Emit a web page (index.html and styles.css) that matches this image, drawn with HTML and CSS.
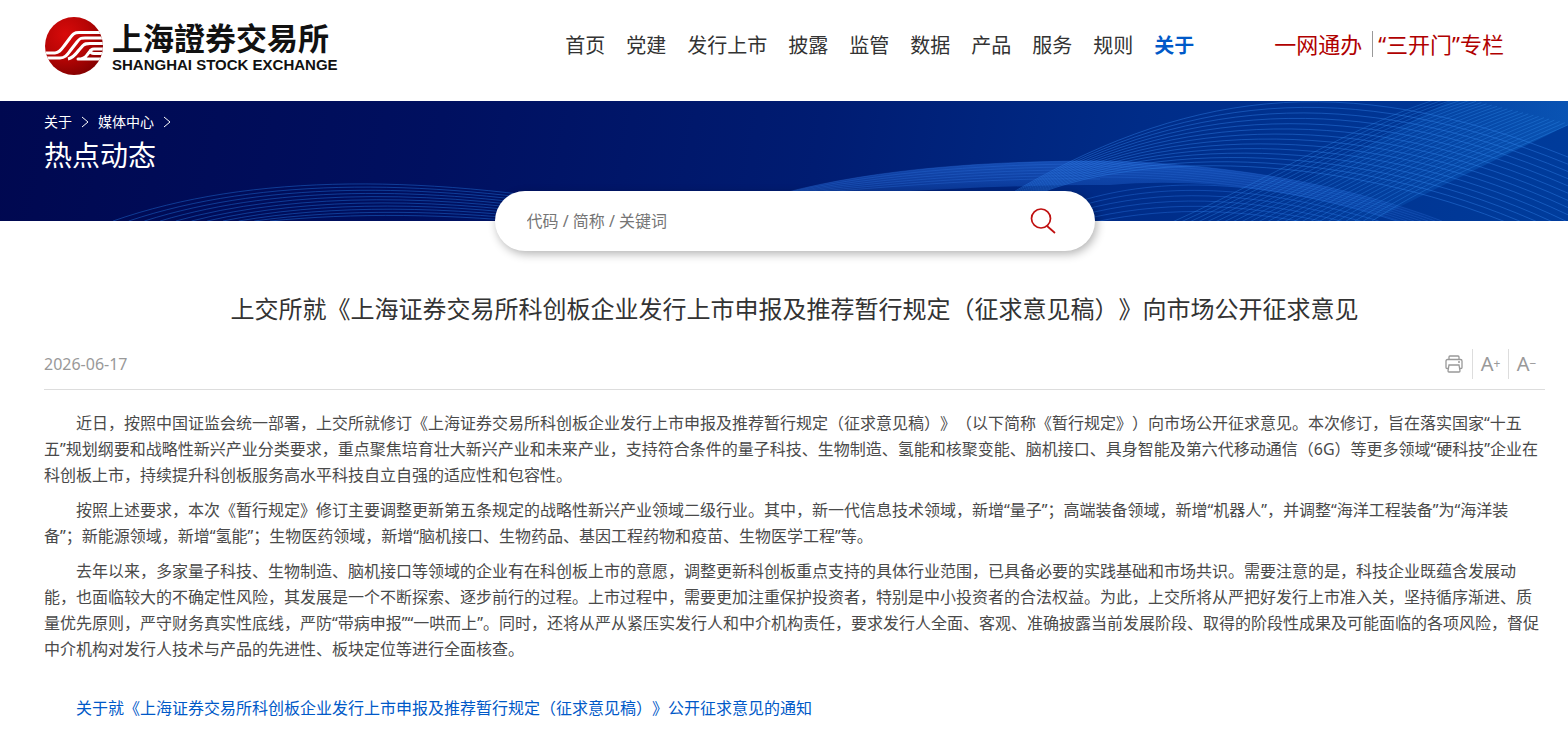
FILE: index.html
```html
<!DOCTYPE html>
<html lang="zh-CN">
<head>
    <meta charset="UTF-8">
    <meta name="viewport" content="width=device-width, initial-scale=1.0">
    <title>热点动态 | 上海证券交易所</title>
    <link rel="stylesheet" href="styles.css">
</head>
<body>
    <header class="header">
        <a class="logo" href="#">
            <svg class="logo-mark" viewBox="0 0 58 58" aria-hidden="true">
                <defs>
                    <radialGradient id="ball" cx="0.35" cy="0.3" r="0.8">
                        <stop offset="0" stop-color="#d80a0a"/>
                        <stop offset="0.5" stop-color="#b80505"/>
                        <stop offset="1" stop-color="#7c0000"/>
                    </radialGradient>
                    <clipPath id="round"><circle cx="29" cy="29" r="29"/></clipPath>
                </defs>
                <circle cx="29" cy="29" r="29" fill="url(#ball)"/>
                <g clip-path="url(#round)" fill="none" stroke="#fff" stroke-width="3" stroke-linejoin="round">
                    <path d="M0 36H10C14 36 16 33 19 29L25 21C28 17 29 15.500 34 15.500H58"/>
                    <path d="M0 41H15C20 41 22 38 25 34L32 25C35 21 36 21 40 21H58"/>
                    <path d="M23 42C28 41 31 37 34 33L38 28.500C40 26.500 41 26.500 45 26.500H58"/>
                    <path d="M58 32H49C45 32 44 36.500 49 36.500H58"/>
                    <path d="M46 33L42 38C40 41 38 42 33 42H58"/>
                </g>
            </svg>
            <span class="logo-text">
                <span class="logo-cn">上海證券交易所</span>
                <span class="logo-en">SHANGHAI STOCK EXCHANGE</span>
            </span>
        </a>
        <nav class="nav">
            <a href="#">首页</a>
            <a href="#">党建</a>
            <a href="#">发行上市</a>
            <a href="#">披露</a>
            <a href="#">监管</a>
            <a href="#">数据</a>
            <a href="#">产品</a>
            <a href="#">服务</a>
            <a href="#">规则</a>
            <a class="active" href="#">关于</a>
        </nav>
        <div class="special">
            <a href="#">一网通办</a>
            <a href="#">“三开门”专栏</a>
        </div>
    </header>

    <div class="banner">
        <svg class="waves" id="waves" viewBox="0 0 1568 120" preserveAspectRatio="xMaxYMid slice" aria-hidden="true">
            <defs>
                <linearGradient id="bandFill" x1="0" y1="0" x2="0" y2="1">
                    <stop offset="0" stop-color="#2468d8" stop-opacity="0.6"/>
                    <stop offset="1" stop-color="#1450b8" stop-opacity="0.15"/>
                </linearGradient>
                <linearGradient id="ribbonFill" x1="0" y1="0" x2="1" y2="0">
                    <stop offset="0" stop-color="#0a58c0" stop-opacity="0"/>
                    <stop offset="1" stop-color="#1878d8" stop-opacity="0.4"/>
                </linearGradient>
            </defs>
            <path fill="url(#bandFill)" d="M780 93C880 66 1000 60 1100 60C1230 62 1350 85 1442 120H1400C1310 90 1200 76 1110 84C980 84 880 92 780 98Z"/>
            <path fill="url(#ribbonFill)" d="M1230 120C1310 80 1390 30 1450 0H1568V24C1490 62 1430 90 1372 120Z"/>
        </svg>
        <div class="banner-text">
            <nav class="crumbs">
                <a href="#">关于</a>
                <svg viewBox="0 0 8 12" aria-hidden="true"><path d="M1 1L7 6L1 11"/></svg>
                <a href="#">媒体中心</a>
                <svg viewBox="0 0 8 12" aria-hidden="true"><path d="M1 1L7 6L1 11"/></svg>
            </nav>
            <h1 class="banner-title">热点动态</h1>
        </div>
    </div>

    <main class="main">
        <form class="search">
            <input type="text" name="keyword" placeholder="代码 / 简称 / 关键词" aria-label="搜索">
            <button type="submit" aria-label="搜索">
                <svg viewBox="0 0 26 26" aria-hidden="true">
                    <circle cx="11" cy="10.500" r="9.500"/>
                    <path d="M17 18L25 25"/>
                </svg>
            </button>
        </form>

        <article>
            <h2 class="title">上交所就《上海证券交易所科创板企业发行上市申报及推荐暂行规定（征求意见稿）》向市场公开征求意见</h2>
            <div class="info">
                <time datetime="2026-06-17">2026-06-17</time>
                <div class="tools">
                    <button type="button" aria-label="打印">
                        <svg viewBox="0 0 18 18" aria-hidden="true">
                            <path d="M4 4.500V2Q4 1 5 1H13Q14 1 14 2V4.500"/>
                            <path d="M3.500 13.500H2Q1 13.500 1 12.500V6Q1 4.500 2.500 4.500H15.500Q17 4.500 17 6V12.500Q17 13.500 16 13.500H14.500"/>
                            <path d="M4 10H14L15 16Q15 17 14 17H4Q3 17 3 16Z"/>
                            <path d="M13 7H15"/>
                        </svg>
                    </button>
                    <button type="button" aria-label="放大字号">A<span>+</span></button>
                    <button type="button" aria-label="缩小字号">A<span>−</span></button>
                </div>
            </div>
            <div class="content">
                <p>近日，按照中国证监会统一部署，上交所就修订《上海证券交易所科创板企业发行上市申报及推荐暂行规定（征求意见稿）》（以下简称《暂行规定》）向市场公开征求意见。本次修订，旨在落实国家“十五五”规划纲要和战略性新兴产业分类要求，重点聚焦培育壮大新兴产业和未来产业，支持符合条件的量子科技、生物制造、氢能和核聚变能、脑机接口、具身智能及第六代移动通信（6G）等更多领域“硬科技”企业在科创板上市，持续提升科创板服务高水平科技自立自强的适应性和包容性。</p>
                <p>按照上述要求，本次《暂行规定》修订主要调整更新第五条规定的战略性新兴产业领域二级行业。其中，新一代信息技术领域，新增“量子”；高端装备领域，新增“机器人”，并调整“海洋工程装备”为“海洋装备”；新能源领域，新增“氢能”；生物医药领域，新增“脑机接口、生物药品、基因工程药物和疫苗、生物医学工程”等。</p>
                <p>去年以来，多家量子科技、生物制造、脑机接口等领域的企业有在科创板上市的意愿，调整更新科创板重点支持的具体行业范围，已具备必要的实践基础和市场共识。需要注意的是，科技企业既蕴含发展动能，也面临较大的不确定性风险，其发展是一个不断探索、逐步前行的过程。上市过程中，需要更加注重保护投资者，特别是中小投资者的合法权益。为此，上交所将从严把好发行上市准入关，坚持循序渐进、质量优先原则，严守财务真实性底线，严防“带病申报”“一哄而上”。同时，还将从严从紧压实发行人和中介机构责任，要求发行人全面、客观、准确披露当前发展阶段、取得的阶段性成果及可能面临的各项风险，督促中介机构对发行人技术与产品的先进性、板块定位等进行全面核查。</p>
                <p class="attach"><a href="#">关于就《上海证券交易所科创板企业发行上市申报及推荐暂行规定（征求意见稿）》公开征求意见的通知</a></p>
            </div>
        </article>
    </main>

    <script src="waves.js"></script>
</body>
</html>
```

FILE: styles.css
```css
* {
    box-sizing: border-box;
}

body {
    margin: 0;
    background: #fff;
    color: #333;
    font-family: "Noto Sans", "Noto Sans CJK SC", sans-serif;
    font-size: 16px;
    text-spacing-trim: space-all;
}

a {
    color: inherit;
    text-decoration: none;
}

button {
    padding: 0;
    border: none;
    background: none;
    font-family: inherit;
    cursor: pointer;
}

h1, h2, p {
    margin: 0;
    font-weight: normal;
}

/* header */
.header {
    display: flex;
    align-items: center;
    height: 101px;
    padding: 0 64px 10px 45px;
}

.logo {
    display: flex;
    align-items: center;
    gap: 9px;
    color: #111;
}

.logo-mark {
    width: 58px;
    height: 58px;
}

.logo-text {
    display: flex;
    flex-direction: column;
    gap: 2px;
    white-space: nowrap;
}

.logo-cn {
    font-family: "Noto Sans CJK TC", sans-serif;
    font-size: 31px;
    font-weight: bold;
    line-height: 36px;
}

.logo-en {
    font-family: "Liberation Sans", Arial, sans-serif;
    font-size: 15px;
    font-weight: bold;
    line-height: 16px;
}

.nav {
    display: flex;
    gap: 21px;
    margin-left: auto;
    font-size: 20px;
    line-height: 28px;
    white-space: nowrap;
}

.nav .active {
    color: #0059c8;
    font-weight: bold;
}

.special {
    display: flex;
    align-items: center;
    margin-left: 80px;
    padding-bottom: 4px;
    color: #b00000;
    font-size: 22px;
    line-height: 26px;
    white-space: nowrap;
}

.special a + a {
    margin-left: 10px;
    padding-left: 5px;
    border-left: 1px solid #999;
}

/* banner */
.banner {
    position: relative;
    height: 120px;
    background: linear-gradient(100deg, #000850 0%, #001060 28%, #001c72 52%, #002c88 72%, #003c9c 100%);
    color: #fff;
    overflow: hidden;
}

.waves {
    position: absolute;
    top: 0;
    left: 0;
    width: 100%;
    height: 100%;
}

.banner-text {
    position: relative;
    padding: 11px 23px 0 44px;
}

.crumbs {
    display: flex;
    align-items: center;
    gap: 9px;
    font-size: 14px;
    line-height: 20px;
}

.crumbs svg {
    width: 8px;
    height: 12px;
    fill: none;
    stroke: #fff;
}

.banner-title {
    margin-top: 4px;
    font-size: 28px;
    line-height: 38px;
}

/* search */
.main {
    padding: 0 23px 20px 44px;
}

.search {
    position: relative;
    display: flex;
    align-items: center;
    width: 600px;
    max-width: 100%;
    height: 60px;
    margin: -30px auto 0;
    padding: 0 39px 0 32px;
    border-radius: 30px;
    background: #fff;
    box-shadow: 2px 3px 10px rgba(0, 0, 0, .3);
}

.search input {
    flex: 1;
    padding: 0;
    border: none;
    outline: none;
    background: transparent;
    font-family: inherit;
    font-size: 16px;
}

.search input::placeholder {
    color: #757575;
}

.search button,
.search svg {
    display: block;
    width: 26px;
    height: 26px;
}

.search svg {
    fill: none;
    stroke: #c01010;
    stroke-width: 1.7;
}

/* article */
.title {
    margin-top: 40px;
    font-size: 24px;
    line-height: 36px;
    text-align: center;
}

.info {
    display: flex;
    align-items: center;
    justify-content: space-between;
    height: 50px;
    margin-top: 13px;
    padding: 0 1px 2px 0;
    border-bottom: 1px solid #ddd;
    color: #999;
}

.tools {
    display: flex;
}

.tools button {
    display: flex;
    align-items: center;
    justify-content: center;
    width: 36px;
    height: 30px;
    color: #999;
    font-size: 20px;
}

.tools button + button {
    border-left: 1px solid #ddd;
}

.tools span {
    font-size: 12px;
}

.tools svg {
    width: 18px;
    height: 18px;
    fill: none;
    stroke: #999;
    stroke-width: 1.3;
}

.content {
    display: flex;
    flex-direction: column;
    gap: 9px;
    padding: 20px 3px 0 0;
    color: #4a4a4a;
    line-height: 26px;
}

.content p {
    text-indent: 2em;
}

.content .attach {
    margin-top: 24px;
    color: #0059c8;
}
```

FILE: waves.js
```js
// each family is a run of curves blended from one curve to another
// a curve is x,y of start, two control points, end
var families = [
    { from: [113, 120, 250, 72, 430, 72, 640, 112], to: [270, 120, 350, 112, 450, 112, 560, 124], count: 11, color: '#2070d8', opacity: 0.6 },
    { from: [780, 93, 880, 66, 1000, 60, 1100, 60], to: [780, 95, 900, 84, 1010, 76, 1100, 78], count: 7, color: '#3070dc', opacity: 0.4 },
    { from: [1100, 60, 1230, 62, 1350, 85, 1442, 120], to: [1100, 76, 1200, 76, 1310, 90, 1400, 120], count: 7, color: '#3070dc', opacity: 0.35 },
    { from: [1005, 96, 1180, -8, 1340, -35, 1568, 56], to: [1030, 96, 1160, 40, 1400, 60, 1568, 150], count: 14, color: '#3080e8', opacity: 0.55 },
    { from: [1080, 100, 1160, 76, 1260, 76, 1400, 121], to: [1080, 124, 1160, 106, 1230, 106, 1320, 124], count: 6, color: '#2874e0', opacity: 0.5 },
    { from: [1170, 122, 1270, 78, 1360, 20, 1450, -6], to: [1372, 120, 1430, 82, 1500, 54, 1570, 23], count: 24, color: '#3088e8', opacity: 0.45 }
];

var svg = document.getElementById('waves');

families.forEach(function (f) {
    for (var i = 0; i < f.count; i++) {
        var t = i / (f.count - 1);
        var p = f.from.map(function (v, k) {
            return Math.round((v + (f.to[k] - v) * t) * 10) / 10;
        });
        var path = document.createElementNS('http://www.w3.org/2000/svg', 'path');
        path.setAttribute('d', 'M' + p[0] + ' ' + p[1] + 'C' + p.slice(2).join(' '));
        path.setAttribute('fill', 'none');
        path.setAttribute('stroke', f.color);
        path.setAttribute('stroke-opacity', f.opacity);
        path.setAttribute('stroke-width', 0.8);
        svg.appendChild(path);
    }
});
```
